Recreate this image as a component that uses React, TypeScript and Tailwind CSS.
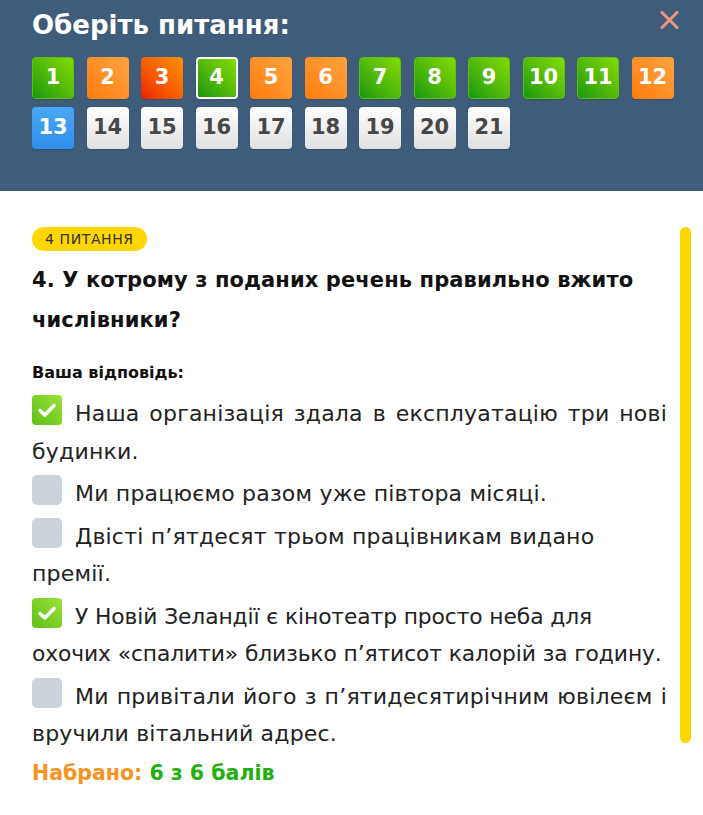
import React from "react";

type Kind = "green" | "orange" | "red" | "blue" | "gray" | "greenSel";

const items: [number, Kind][] = [
  [1, "green"], [2, "orange"], [3, "red"], [4, "greenSel"], [5, "orange"], [6, "orange"],
  [7, "green"], [8, "green"], [9, "green"], [10, "green"], [11, "green"], [12, "orange"],
  [13, "blue"], [14, "gray"], [15, "gray"], [16, "gray"], [17, "gray"], [18, "gray"],
  [19, "gray"], [20, "gray"], [21, "gray"],
];

const kindClass: Record<Kind, string> = {
  green: "bg-gradient-to-bl from-[#84dc00] to-[#0c980e] text-white border border-[#5cc400]",
  greenSel: "bg-gradient-to-bl from-[#84dc00] to-[#0c980e] text-white border-2 border-white",
  orange: "bg-gradient-to-bl from-[#ffa43e] to-[#ff7c05] text-white",
  red: "bg-gradient-to-bl from-[#ff9000] to-[#ee1400] text-white",
  blue: "bg-gradient-to-b from-[#4aa8f5] to-[#2f8ee8] text-white",
  gray: "bg-gradient-to-b from-[#ffffff] to-[#e0e0e0] text-[#474747] !font-semibold",
};

const options: { text: string; checked: boolean; justify?: boolean; tight?: boolean }[] = [
  { text: "Наша організація здала в експлуатацію три нові будинки.", checked: true, justify: true },
  { text: "Ми працюємо разом уже півтора місяці.", checked: false },
  { text: "Двісті п’ятдесят трьом працівникам видано премії.", checked: false },
  { text: "У Новій Зеландії є кінотеатр просто неба для охочих «спалити» близько п’ятисот калорій за годину.", checked: true, tight: true },
  { text: "Ми привітали його з п’ятидесятирічним ювілеєм і вручили вітальний адрес.", checked: false, justify: true },
];

function Box({ checked }: { checked: boolean }) {
  if (checked) {
    return (
      <span className="inline-block overflow-hidden align-baseline -my-[4px] w-[30px] h-[30px] rounded-[4px] bg-gradient-to-bl from-[#9be23a] to-[#5cbf15] mr-[13px]">
        <svg className="block mx-auto mt-[7px]" width="20" height="16" viewBox="0 0 20 16">
          <path d="M3 8.5 L7.8 13 L17 3.5" stroke="white" strokeWidth="3.6" fill="none" strokeLinecap="round" strokeLinejoin="round" />
        </svg>
      </span>
    );
  }
  return <span className="inline-block overflow-hidden align-baseline -my-[4px] w-[30px] h-[30px] rounded-[5px] bg-[#cbd2da] mr-[13px]" />;
}

export default function App() {
  return (
    <div className="w-[703px] h-[815px] bg-white overflow-hidden" style={{ fontFamily: '"DejaVu Sans", "Open Sans", sans-serif' }}>
      <div className="h-[191px] bg-[#3f5c7b] relative px-[32px] pt-[8px]">
        <div className="text-white font-bold text-[26px] leading-[34px]">Оберіть питання:</div>
        <button className="absolute right-[24px] top-[11px]">
          <svg width="19" height="18" viewBox="0 0 19 18">
            <path d="M2 1.5 L17 16.5 M17 1.5 L2 16.5" stroke="#f2957f" strokeWidth="3" strokeLinecap="round" />
          </svg>
        </button>
        <div className="mt-[15px] grid grid-cols-[repeat(12,42px)] gap-x-[12.5px] gap-y-[8px]">
          {items.map(([n, k]) => (
            <div
              key={n}
              className={`w-[42px] h-[42px] rounded-[4px] flex items-center justify-center text-[21px] font-bold shadow-[0_1px_1px_rgba(0,0,0,0.15)] ${kindClass[k]}`}
            >
              {n}
            </div>
          ))}
        </div>
      </div>
      <div className="flex pl-[32px] pr-[12px] pt-[36px]">
        <div className="flex-1 pr-[13px]">
          <span className="inline-block bg-[#ffd600] rounded-full px-[13px] h-[24px] leading-[24px] text-[14px] tracking-[0.6px] text-[#333]">4 ПИТАННЯ</span>
          <div className="mt-[9px] text-[21px] font-bold text-[#111] leading-[40px] tracking-[0.1px]">
            4. У котрому з поданих речень правильно вжито числівники?
          </div>
          <div className="mt-[23px] text-[16px] font-bold text-[#111] leading-[20px]">Ваша відповідь:</div>
          <div className="mt-[12px] flex flex-col gap-[5px]">
            {options.map((o, i) => (
              <div
                key={i}
                className={`leading-[37.5px] text-[#222] ${o.tight ? "text-[21.8px] tracking-[-0.1px]" : "text-[22px] tracking-[0.2px]"} ${o.justify ? "text-justify" : ""}`}
              >
                <Box checked={o.checked} />
                {o.text}
              </div>
            ))}
          </div>
          <div className="mt-[6px] text-[20.5px] font-bold leading-[28px]">
            <span className="text-[#f7931e]">Набрано: </span>
            <span className="text-[#1fb00f]">6 з 6 балів</span>
          </div>
        </div>
        <div className="w-[11px] h-[516px] rounded-full bg-[#ffd600] mt-0" />
      </div>
    </div>
  );
}
